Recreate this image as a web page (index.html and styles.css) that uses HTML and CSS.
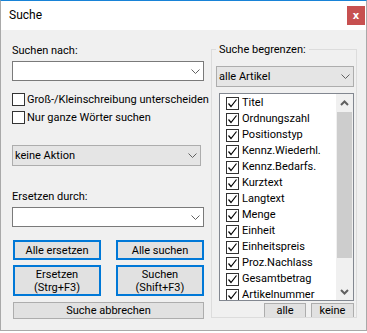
FILE: index.html
```html
<!DOCTYPE html>
<html lang="de">
  <head>
    <meta charset="UTF-8" />
    <title>Suche</title>
    <link rel="stylesheet" href="styles.css">
  </head>
  <body>
    <div class="window">
      <div class="titlebar">
        <span class="title">Suche</span>
        <button class="close-btn">x</button>
      </div>

      <div class="content">
        <div class="left">
          <div class="field-label">Suchen nach:</div>
          <div class="combo">
            <span class="combo-text"></span>
            <svg class="chev" width="9" height="5" viewBox="0 0 9 5"><polyline points="0.5,0.5 4.5,4.5 8.5,0.5" /></svg>
          </div>

          <div class="check-rows">
            <label class="check-row"><span class="box"></span>Groß-/Kleinschreibung unterscheiden</label>
            <label class="check-row"><span class="box"></span>Nur ganze Wörter suchen</label>
          </div>

          <div class="combo combo-gray action-combo">
            <span class="combo-text">keine Aktion</span>
            <svg class="chev" width="9" height="5" viewBox="0 0 9 5"><polyline points="0.5,0.5 4.5,4.5 8.5,0.5" /></svg>
          </div>

          <div class="field-label replace-label">Ersetzen durch:</div>
          <div class="combo">
            <span class="combo-text"></span>
            <svg class="chev" width="9" height="5" viewBox="0 0 9 5"><polyline points="0.5,0.5 4.5,4.5 8.5,0.5" /></svg>
          </div>

          <div class="btn-grid">
            <button class="btn btn-default">Alle ersetzen</button>
            <button class="btn btn-default">Alle suchen</button>
            <button class="btn btn-default btn-tall">Ersetzen<br>(Strg+F3)</button>
            <button class="btn btn-default btn-tall">Suchen<br>(Shift+F3)</button>
          </div>
          <button class="btn btn-cancel">Suche abbrechen</button>
        </div>

        <fieldset class="limit">
          <legend>Suche begrenzen:</legend>
          <div class="combo combo-gray">
            <span class="combo-text">alle Artikel</span>
            <svg class="chev" width="9" height="5" viewBox="0 0 9 5"><polyline points="0.5,0.5 4.5,4.5 8.5,0.5" /></svg>
          </div>

          <div class="listbox">
            <ul class="items" id="items"></ul>
            <div class="scrollbar">
              <span class="arrow">
                <svg width="9" height="6" viewBox="0 0 9 6"><polyline points="1,5 4.5,1.5 8,5" /></svg>
              </span>
              <span class="track"><span class="thumb"></span></span>
              <span class="arrow">
                <svg width="9" height="6" viewBox="0 0 9 6"><polyline points="1,1 4.5,4.5 8,1" /></svg>
              </span>
            </div>
          </div>

          <div class="list-actions">
            <button class="btn btn-small btn-all">alle</button>
            <button class="btn btn-small btn-none">keine</button>
          </div>
        </fieldset>
      </div>
    </div>

    <script>
      const fields = [
        "Titel",
        "Ordnungszahl",
        "Positionstyp",
        "Kennz.Wiederhl.",
        "Kennz.Bedarfs.",
        "Kurztext",
        "Langtext",
        "Menge",
        "Einheit",
        "Einheitspreis",
        "Proz.Nachlass",
        "Gesamtbetrag",
        "Artikelnummer",
      ];

      const list = document.getElementById("items");
      fields.forEach((name) => {
        const li = document.createElement("li");
        li.className = "item";
        li.innerHTML =
          '<span class="box checked"><svg width="11" height="11" viewBox="0 0 11 11"><polyline points="1.5,5.5 4,8.5 9.5,1.5" /></svg></span>' +
          name;
        list.appendChild(li);
      });
    </script>
  </body>
</html>
```

FILE: styles.css
```css
html,
body {
  margin: 0;
  background-color: #ffffff;
}
body {
  font-family: Roboto, "Noto Sans", sans-serif;
  font-size: 11px;
  color: #000000;
}
.window {
  width: 367px;
  height: 331px;
  box-sizing: border-box;
  border: 1px solid #a9a9a9;
  border-top-color: #1883d7;
  background-color: #f0f0f0;
  display: flex;
  flex-direction: column;
}
.titlebar {
  height: 29px;
  background-color: #ffffff;
  display: flex;
  align-items: center;
  justify-content: space-between;
  padding: 0 1px 0 8px;
}
.title {
  font-size: 12px;
  line-height: 15px;
}
.close-btn {
  width: 18px;
  height: 19px;
  border: none;
  padding: 0;
  background-color: #c75050;
  color: #ffffff;
  font-family: "DejaVu Sans", sans-serif;
  font-weight: bold;
  font-size: 10px;
  line-height: 17px;
}

.content {
  display: flex;
  align-items: flex-start;
  gap: 7px;
  padding: 0 9px 0 11px;
}
.left {
  width: 192px;
  padding-top: 13px;
  display: flex;
  flex-direction: column;
}
.field-label {
  line-height: 15px;
  margin-bottom: 3px;
}
.replace-label {
  margin-top: 23px;
}

.combo {
  height: 20px;
  box-sizing: border-box;
  border: 1px solid #7a7a7a;
  background-color: #ffffff;
  display: flex;
  align-items: center;
  justify-content: space-between;
  padding: 0 3px 0 2px;
  line-height: 15px;
}
.combo-gray {
  height: 21px;
  background-color: #e5e5e5;
  border-color: #adadad;
}
.chev {
  fill: none;
  stroke: #606060;
  stroke-width: 1;
}
.action-combo {
  width: 189px;
  margin-top: 18px;
}

.check-rows {
  display: flex;
  flex-direction: column;
  margin-top: 10px;
}
.check-row {
  height: 18px;
  display: flex;
  align-items: flex-start;
  gap: 2px;
  line-height: 17px;
  white-space: nowrap;
}
.box {
  width: 13px;
  height: 13px;
  box-sizing: border-box;
  border: 1px solid #333333;
  background-color: #ffffff;
  margin-top: 2px;
  flex: none;
  display: flex;
  align-items: center;
  justify-content: center;
}
.box svg {
  fill: none;
  stroke: #000000;
  stroke-width: 1.2;
}

.btn {
  font-family: inherit;
  font-size: 11px;
  color: #000000;
  background-color: #e1e1e1;
  border: 1px solid #adadad;
  padding: 0;
  line-height: 13px;
}
.btn-grid {
  display: grid;
  grid-template-columns: 88px 88px;
  column-gap: 15px;
  row-gap: 5px;
  margin: 13px 0 0 1px;
}
.btn-default {
  height: 20px;
  border: 2px solid #0078d7;
}
.btn-tall {
  height: 31px;
}
.btn-cancel {
  width: 191px;
  height: 17px;
  margin: 6px 0 0 1px;
}

.limit {
  width: 146px;
  box-sizing: border-box;
  margin: 12px 0 0;
  padding: 9px 2px 0 4px;
  border: 1px solid #dcdcdc;
  min-width: 0;
}
.limit legend {
  padding: 0 3px;
  line-height: 15px;
}
.listbox {
  height: 208px;
  box-sizing: border-box;
  margin: 6px 0 0 3px;
  border: 1px solid #828790;
  background-color: #ffffff;
  display: flex;
  overflow: hidden;
}
.items {
  flex: 1;
  list-style: none;
  margin: 0;
  padding: 1px 0 0 6px;
}
.item {
  height: 16px;
  display: flex;
  align-items: flex-start;
  gap: 3px;
  line-height: 16px;
  white-space: nowrap;
}
.scrollbar {
  width: 17px;
  background-color: #f0f0f0;
  display: flex;
  flex-direction: column;
}
.arrow {
  height: 17px;
  display: flex;
  align-items: center;
  justify-content: center;
}
.arrow svg {
  fill: none;
  stroke: #606060;
  stroke-width: 2;
}
.track {
  flex: 1;
  padding-top: 1px;
}
.thumb {
  display: block;
  height: 146px;
  margin: 0 1px;
  background-color: #cdcdcd;
}
.list-actions {
  display: flex;
  justify-content: flex-end;
  gap: 5px;
  margin-top: 2px;
}
.btn-small {
  height: 14px;
  border-bottom: none;
  flex: none;
}
.btn-all {
  width: 42px;
}
.btn-none {
  width: 43px;
}
```
